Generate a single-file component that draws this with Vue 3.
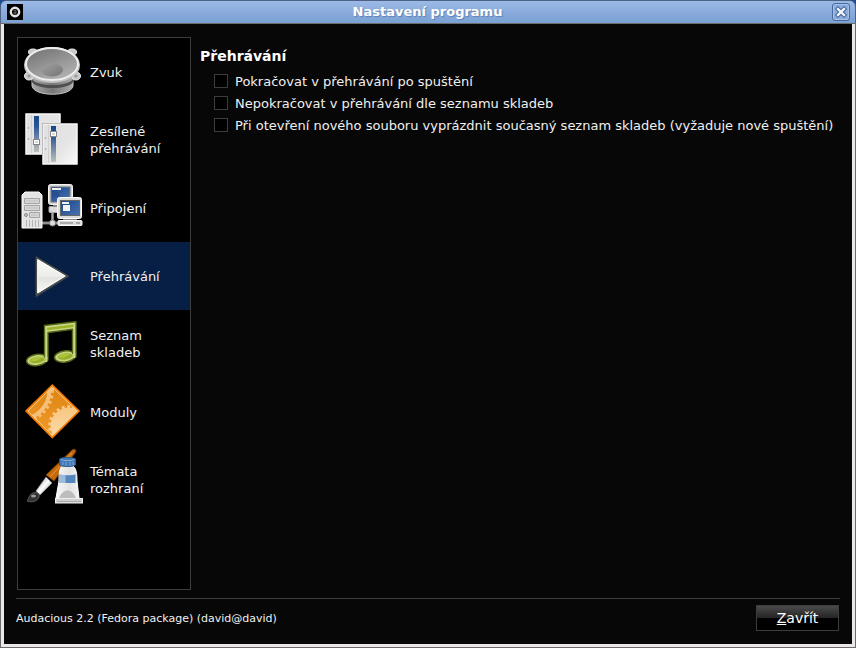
<template>
  <div class="desktop">
    <div class="window">
      <header class="titlebar">
        <svg class="app-icon" viewBox="0 0 16 16" aria-hidden="true">
          <rect width="16" height="16" fill="#000" />
          <circle cx="8" cy="8" r="4.2" fill="none" stroke="#e4e4e4" stroke-width="2.4" />
          <path d="M6.6 6.6h2.4v3.2H7V8.2h2" fill="none" stroke="#777" stroke-width="0.8" />
        </svg>
        <h1 class="window-title">Nastavení programu</h1>
        <button class="window-close" type="button" aria-label="Zavřít okno">
          <svg viewBox="0 0 12 12">
            <path d="M3 3l6 6M9 3l-6 6" stroke="#3f5f91" stroke-width="4.4" stroke-linecap="square" />
            <path d="M3 3l6 6M9 3l-6 6" stroke="#f2f6fc" stroke-width="2.4" stroke-linecap="square" />
          </svg>
        </button>
      </header>

      <div class="body">
        <div class="content">
          <nav class="categories">
            <button
              v-for="category in categories"
              :key="category.id"
              type="button"
              class="category"
              :class="{ selected: category.id === selected }"
              @click="selected = category.id"
            >
              <svg v-if="category.id === 'audio'" class="icon" viewBox="0 0 64 64">
                <defs>
                  <linearGradient id="cone" x1="0" y1="0" x2="0.6" y2="1">
                    <stop offset="0" stop-color="#6f6f6f" />
                    <stop offset="1" stop-color="#b0b0b0" />
                  </linearGradient>
                  <linearGradient id="magnet" x1="0" y1="0" x2="1" y2="0">
                    <stop offset="0" stop-color="#a8a8a8" />
                    <stop offset="0.5" stop-color="#777" />
                    <stop offset="1" stop-color="#aaa" />
                  </linearGradient>
                  <linearGradient id="dome" x1="0" y1="0" x2="1" y2="1">
                    <stop offset="0" stop-color="#a2a2a2" />
                    <stop offset="1" stop-color="#747474" />
                  </linearGradient>
                </defs>
                <path d="M12 34v12c2 11 39 11 41 0V34z" fill="url(#magnet)" stroke="#c4c4c4" />
                <path d="M12 39c5 8 36 8 41 0v3c-5 8-36 8-41 0z" fill="#4e4e4e" />
                <g fill="#c9c9c9" stroke="#eee">
                  <ellipse cx="13" cy="12" rx="4.5" ry="3" />
                  <ellipse cx="52" cy="12" rx="4.5" ry="3" />
                  <ellipse cx="9" cy="36" rx="4.5" ry="4" />
                  <ellipse cx="56" cy="36" rx="4.5" ry="4" />
                </g>
                <ellipse cx="32" cy="25" rx="27" ry="17" fill="#999" stroke="#c4c4c4" stroke-width="2" />
                <ellipse cx="32" cy="24" rx="26" ry="16" fill="url(#cone)" stroke="#ededed" stroke-width="2" />
                <ellipse cx="32" cy="30" rx="11" ry="6.5" fill="url(#dome)" />
                <g fill="#999">
                  <circle cx="9" cy="36" r="1.5" />
                  <circle cx="56" cy="36" r="1.5" />
                </g>
              </svg>

              <svg v-else-if="category.id === 'replaygain'" class="icon" viewBox="0 0 64 64">
                <defs>
                  <linearGradient id="level" x1="0" y1="0" x2="0" y2="1">
                    <stop offset="0" stop-color="#17468f" />
                    <stop offset="0.3" stop-color="#2f5796" />
                    <stop offset="1" stop-color="#bdc2b8" />
                  </linearGradient>
                  <linearGradient id="panel" x1="0" y1="0" x2="1" y2="1">
                    <stop offset="0" stop-color="#e0e0e0" />
                    <stop offset="0.6" stop-color="#e5e5e5" />
                    <stop offset="1" stop-color="#fafafa" />
                  </linearGradient>
                </defs>
                <g v-for="panel in panels" :key="panel.x" :transform="`translate(${panel.x} ${panel.y})`">
                  <rect width="36" height="42" rx="1" fill="#777" />
                  <rect x="1" y="1" width="34" height="40" fill="url(#panel)" stroke="#fff" />
                  <path d="M6.5 2v38" stroke="#d0d0d0" />
                  <rect x="9" y="3" width="5" height="36" fill="url(#level)" />
                  <circle cx="3.5" cy="15" r="0.8" fill="#999" />
                  <circle cx="3.5" cy="26" r="0.8" fill="#999" />
                  <g :transform="`translate(0 ${panel.knob})`">
                    <rect x="8.5" y="0.5" width="6" height="5" fill="#fff" stroke="#858585" />
                    <rect x="10" y="2" width="3" height="2" fill="#d8d8d8" />
                  </g>
                </g>
              </svg>

              <svg v-else-if="category.id === 'connectivity'" class="icon" viewBox="0 0 64 64">
                <defs>
                  <linearGradient id="screen" x1="0" y1="0" x2="1" y2="1">
                    <stop offset="0" stop-color="#17458f" />
                    <stop offset="1" stop-color="#4a73ac" />
                  </linearGradient>
                </defs>
                <path d="M22 47h17M32.500 36v11" stroke="#777" stroke-width="3" />
                <path d="M22 47h17M32.500 36v11" stroke="#aaa" stroke-width="1" />
                <path d="M2 19l3-3h14l3 3v33H2z" fill="#e4e4e4" stroke="#fafafa" />
                <path d="M4.500 22.500h15v5h-15zM4.500 29.500h15v5h-15zM9.500 36.500h10v5h-10z" fill="#d8d8d8" stroke="#a4a4a4" />
                <path d="M6 25h12M6 32h12M11 39h7" stroke="#bbb" />
                <circle cx="6" cy="39" r="1.5" fill="#ccc" stroke="#888" />
                <path d="M6.500 44v7M9.500 44v7M12.500 44v7M15.500 44v7M18.500 44v7" stroke="#b4b4b4" />
                <rect x="29" y="30.500" width="20" height="6" rx="1" fill="#ddd" stroke="#aaa" />
                <path d="M33 28h14v3H33z" fill="#888" />
                <circle cx="32.500" cy="47" r="3" fill="#ddd" stroke="#888" />
                <rect x="28.500" y="8.500" width="24" height="20" rx="2" fill="#d4d4d4" stroke="#f2f2f2" />
                <rect x="31" y="11" width="19" height="15" fill="url(#screen)" stroke="#777" />
                <path d="M32 12h9v2h-9z" fill="#eee" />
                <path d="M32 16h7v5h-7z" fill="#284f90" />
                <path d="M43 42h14v3H43z" fill="#888" />
                <rect x="37.500" y="21.500" width="24" height="21" rx="2" fill="#dcdcdc" stroke="#fafafa" />
                <rect x="40.500" y="24.500" width="19" height="15" fill="url(#screen)" stroke="#666" />
                <path d="M42 26h7v2h-7zM43 29h7v6h-7z" fill="#f1f1f1" />
                <rect x="38" y="44.500" width="24" height="5" rx="1" fill="#ddd" stroke="#fafafa" />
                <path d="M40 47h13M56 47h4" stroke="#aaa" stroke-width="2" />
              </svg>

              <svg v-else-if="category.id === 'playback'" class="icon" viewBox="0 0 64 64">
                <defs>
                  <linearGradient id="play" x1="0" y1="0" x2="0" y2="1">
                    <stop offset="0" stop-color="#fbfbfa" />
                    <stop offset="0.5" stop-color="#ececea" />
                    <stop offset="0.55" stop-color="#e2e2df" />
                    <stop offset="1" stop-color="#fdfdfc" />
                  </linearGradient>
                </defs>
                <path d="M15.500 14v40l34-21.500z" fill="#3a4658" opacity="0.6" />
                <path d="M16.500 13.500v37.500l31-19z" fill="url(#play)" stroke="#4c4e4a" stroke-width="1.6" />
                <path d="M17.800 15.800v33l27.200-16.800z" fill="none" stroke="#fff" />
              </svg>

              <svg v-else-if="category.id === 'playlist'" class="icon" viewBox="0 0 64 64">
                <g fill="#c6d888" stroke="#566a18" stroke-width="1.4" stroke-linejoin="round">
                  <ellipse cx="17" cy="48" rx="10.5" ry="5.6" transform="rotate(-8 17 48)" />
                  <ellipse cx="45" cy="44.500" rx="10.5" ry="5.6" transform="rotate(-8 45 44.500)" />
                  <path d="M24.500 48V13.500L56 9.800V45l-3.500-1V17.300L28 20.500V48z" />
                </g>
                <path d="M25.200 45h2.200v5h-2.200zM53 41h2.300v5H53z" fill="#c6d888" />
                <path d="M27 15.800L53.500 12.500v2.600L27 18.300z" fill="#9bb228" />
                <g fill="#98ae28" stroke="#c6d888" stroke-width="0.8">
                  <ellipse cx="17" cy="48" rx="8" ry="3.6" transform="rotate(-8 17 48)" />
                  <ellipse cx="45" cy="44.500" rx="8" ry="3.6" transform="rotate(-8 45 44.500)" />
                </g>
                <path d="M10 49c2-4 8-5 12-4-2 3-7 5-12 4zM38 45.500c2-4 8-5 12-4-2 3-7 5-12 4z" fill="#adc23f" />
              </svg>

              <svg v-else-if="category.id === 'plugin'" class="icon" viewBox="0 0 64 64">
                <defs>
                  <clipPath id="diamond"><path d="M32.300 5L59 31 32.300 57.500 6 31z" /></clipPath>
                  <linearGradient id="orange" x1="0" y1="0" x2="0" y2="1">
                    <stop offset="0" stop-color="#dd8514" />
                    <stop offset="1" stop-color="#f09a28" />
                  </linearGradient>
                  <linearGradient id="cog" x1="0" y1="0" x2="0" y2="1">
                    <stop offset="0" stop-color="#f8c681" />
                    <stop offset="1" stop-color="#fce0b4" />
                  </linearGradient>
                </defs>
                <path d="M32.300 5L59 31 32.300 57.500 6 31z" fill="url(#orange)" />
                <g clip-path="url(#diamond)">
                  <circle cx="0" cy="10" r="29.5" fill="none" stroke="#f5bf78" stroke-width="4" />
                  <circle cx="0" cy="10" r="32.500" fill="none" stroke="#f5bf78" stroke-width="3" stroke-dasharray="2.8 2.8" />
                  <circle cx="49" cy="46" r="18.5" fill="url(#cog)" />
                  <circle cx="49" cy="46" r="19.500" fill="none" stroke="#f9cc8d" stroke-width="2.6" stroke-dasharray="2.8 2.8" />
                </g>
                <path d="M32.300 5L59 31 32.300 57.500 6 31z" fill="none" stroke="#f57900" stroke-width="1.6" />
                <path d="M32.300 7L57 31 32.300 55.500 8 31z" fill="none" stroke="#fcd39a" stroke-width="0.9" />
              </svg>

              <svg v-else class="icon" viewBox="0 4 64 64">
                <defs>
                  <linearGradient id="ferrule" x1="0" y1="0" x2="1" y2="1">
                    <stop offset="0" stop-color="#888" />
                    <stop offset="0.5" stop-color="#fff" />
                    <stop offset="1" stop-color="#777" />
                  </linearGradient>
                  <linearGradient id="tube" x1="0" y1="0" x2="1" y2="0">
                    <stop offset="0" stop-color="#f7f7f7" />
                    <stop offset="0.6" stop-color="#e2e2e2" />
                    <stop offset="1" stop-color="#f4f4f4" />
                  </linearGradient>
                </defs>
                <path d="M52 6c3-2 5 0 3 3L34 37l-8-6z" fill="#c46a0b" stroke="#6e3a08" />
                <path d="M52 9L30 33" stroke="#ed9a3c" />
                <path d="M26 33l6 6-12 12-4-4z" fill="url(#ferrule)" stroke="#999" stroke-width="0.7" />
                <path d="M7 57c2-2 2-7 6-8 4-2 7 1 6 4-1 4-7 6-12 4z" fill="#333" stroke="#5a5a5a" />
                <ellipse cx="13.500" cy="52" rx="2.500" ry="1.500" fill="#999" />
                <path d="M42 22h11c4 3 4 11 4 15l2 17H36l3-17c0-5 0-12 3-15z" fill="url(#tube)" stroke="#fff" />
                <path d="M39.500 30.500c4 1 12 1 16 0V39H39.500z" fill="#5586bd" />
                <path d="M39.500 30.500c2 .6 4 .8 6 .8V39h-6z" fill="#9dbbdc" />
                <path d="M39 54c4-10 13-10 17 0z" fill="#bdbdbd" />
                <path d="M39.500 15c1-2 15-2 16 0v6c-2 2-14 2-16 0z" fill="#4378b5" stroke="#28588f" />
                <path d="M41 15.500c3 1.500 10 1.500 13 0" fill="none" stroke="#8db4de" />
                <path d="M43 18v3M46 18v4M50 18v4M53 18v3" stroke="#7aa5d5" />
                <rect x="35.500" y="54.500" width="27" height="4.500" fill="#d0d0d0" stroke="#eee" />
                <path d="M37 57.500h24" stroke="#aaa" />
              </svg>
              <span class="category-label">{{ category.label }}</span>
            </button>
          </nav>

          <main class="page">
            <h2 class="section-title">Přehrávání</h2>
            <div v-for="option in options" :key="option.id" class="option">
              <input :id="option.id" v-model="option.enabled" type="checkbox" />
              <label :for="option.id">{{ option.label }}</label>
            </div>
          </main>
        </div>

        <footer class="footer">
          <span class="version">Audacious 2.2 (Fedora package) (david@david)</span>
          <button class="close-btn" type="button"><u>Z</u>avřít</button>
        </footer>
      </div>
    </div>
  </div>
</template>

<script setup>
import { ref } from 'vue'

const selected = ref('playback')

const categories = [
  { id: 'audio', label: 'Zvuk' },
  { id: 'replaygain', label: 'Zesílené přehrávání' },
  { id: 'connectivity', label: 'Připojení' },
  { id: 'playback', label: 'Přehrávání' },
  { id: 'playlist', label: 'Seznam skladeb' },
  { id: 'plugin', label: 'Moduly' },
  { id: 'themes', label: 'Témata rozhraní' }
]

// the two slider panels of the replaygain icon
const panels = [
  { x: 5, y: 5, knob: 26 },
  { x: 22, y: 15, knob: 8 }
]

const options = ref([
  { id: 'resume', label: 'Pokračovat v přehrávání po spuštění', enabled: false },
  { id: 'no-advance', label: 'Nepokračovat v přehrávání dle seznamu skladeb', enabled: false },
  {
    id: 'clear-playlist',
    label: 'Při otevření nového souboru vyprázdnit současný seznam skladeb (vyžaduje nové spuštění)',
    enabled: false
  }
])
</script>

<style>
body {
  margin: 0;
}
</style>

<style scoped>
* {
  box-sizing: border-box;
}
.desktop {
  display: flex;
  min-height: 100vh;
  background: #1d4a8e;
  font-family: "DejaVu Sans", sans-serif;
  font-size: 13px;
  line-height: 17px;
  color: #f0f0f0;
}
.window {
  flex: 1;
  display: flex;
  flex-direction: column;
  border-radius: 6px 6px 0 0;
  overflow: hidden;
}
.titlebar {
  display: flex;
  align-items: center;
  height: 24px;
  padding: 0 5px 0 6px;
  border: 1px solid #4b6285;
  border-bottom-color: #4a71a8;
  border-radius: 6px 6px 0 0;
  background: linear-gradient(#9dbae6, #86a9da 60%, #7ba1d4);
}
.app-icon {
  width: 16px;
  height: 16px;
}
.window-title {
  flex: 1;
  margin: 0;
  font-size: 13px;
  line-height: 16px;
  text-align: center;
  color: #fff;
  text-shadow: 1px 1px 1px #5f80b3;
}
.window-close {
  display: flex;
  align-items: center;
  justify-content: center;
  width: 18px;
  height: 18px;
  padding: 0;
  border: 1px solid #486a9e;
  border-radius: 3px;
  background: #8bacdc;
  box-shadow: inset 0 0 0 1px #a4bfe8;
}
.window-close svg {
  width: 12px;
  height: 12px;
}
.body {
  flex: 1;
  display: flex;
  flex-direction: column;
  padding: 13px 12px 12px;
  border: 3px solid #ebe8e7;
  border-top: 0;
  background: #070707;
  margin: 0 1px 1px;
  outline: 1px solid #6b6b6b;
}
.content {
  flex: 1;
  display: flex;
  gap: 9px;
  padding: 0 1px 8px;
}
.categories {
  width: 174px;
  flex-shrink: 0;
  border: 1px solid #3d3d3d;
  background: #000;
}
.category {
  display: flex;
  align-items: center;
  gap: 6px;
  width: 100%;
  height: 68px;
  padding: 2px;
  border: 0;
  background: none;
  font: inherit;
  color: inherit;
  text-align: left;
}
.category.selected {
  background: #071e45;
}
.category-label {
  width: 80px;
}
.icon {
  width: 64px;
  height: 64px;
  flex-shrink: 0;
}
.page {
  flex: 1;
  min-width: 0;
  padding-top: 11px;
}
.section-title {
  margin: 0 0 5px;
  font-size: 14px;
  line-height: 17px;
  color: #fff;
}
.option {
  display: flex;
  align-items: center;
  height: 22px;
  padding-left: 14px;
  gap: 7px;
}
.option input {
  appearance: none;
  flex-shrink: 0;
  width: 14px;
  height: 14px;
  margin: 0;
  border: 1px solid #3d3d3d;
  background: #000;
}
.option input:checked {
  background: #f0f0f0;
  box-shadow: inset 0 0 0 2px #000;
}
.footer {
  display: flex;
  align-items: center;
  justify-content: space-between;
  padding: 6px 1px 1px 0;
  border-top: 1px solid #3d3d3d;
}
.version {
  font-size: 11px;
}
.close-btn {
  width: 83px;
  height: 26px;
  padding: 0;
  border: 1px solid #3d3d3d;
  background: linear-gradient(#4a4a4a, #262626 48%, #000 50%);
  font: inherit;
  font-size: 14px;
  color: #fff;
}
</style>
